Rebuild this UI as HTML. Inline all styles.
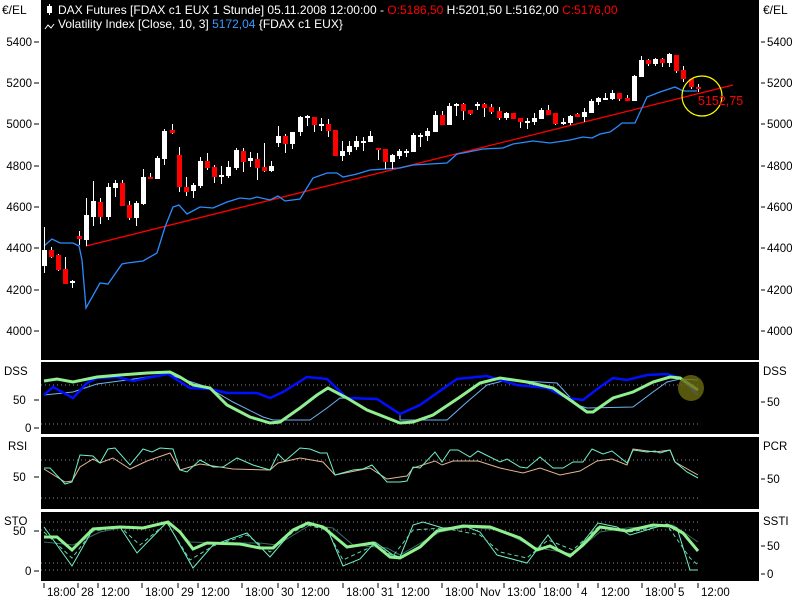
<!DOCTYPE html>
<html><head><meta charset="utf-8"><style>
html,body{margin:0;padding:0;background:#fff;width:800px;height:600px;overflow:hidden}
svg{display:block}
text{font-family:"Liberation Sans",sans-serif;font-size:11.5px;fill:#000}
.hd{font-size:12px}
.w{fill:#fff}.r{fill:#f00}.b{fill:#3b9bff}
</style></head><body>
<svg width="800" height="600" viewBox="0 0 800 600" xmlns="http://www.w3.org/2000/svg">
<rect x="0" y="0" width="800" height="600" fill="#fff"/>
<rect x="41" y="0" width="718" height="360" fill="#000"/>
<rect x="41" y="362" width="718" height="72" fill="#000"/>
<rect x="41" y="437" width="718" height="72" fill="#000"/>
<rect x="41" y="512" width="718" height="69" fill="#000"/>

<path d="M49.5 4V15" stroke="#fff"/><rect x="47" y="6" width="5" height="7" fill="#fff"/>
<text x="58" y="14" class="w hd">DAX Futures [FDAX c1 EUX  1 Stunde] 05.11.2008 12:00:00 - <tspan class="r">O:5186,50</tspan> H:5201,50 L:5162,00 <tspan class="r">C:5176,00</tspan></text>
<path d="M45 29l3-4 3 3 3-4" stroke="#fff" fill="none"/>
<text x="58" y="28" class="w hd">Volatility Index [Close, 10, 3] <tspan class="b">5172,04</tspan> {FDAX c1 EUX}</text>

<text x="2" y="14" class="hd">€/EL</text><text x="763" y="14" class="hd">€/EL</text>
<g text-anchor="end">
<text x="32" y="46">5400</text><text x="32" y="87">5200</text><text x="32" y="128">5000</text><text x="32" y="170">4800</text><text x="32" y="211">4600</text><text x="32" y="252">4400</text><text x="32" y="294">4200</text><text x="32" y="335">4000</text>
</g>
<path d="M34 42h5M34 83h5M34 124h5M34 166h5M34 207h5M34 248h5M34 290h5M34 331h5M761 42h4M761 83h4M761 124h4M761 166h4M761 207h4M761 248h4M761 290h4M761 331h4" stroke="#000"/>
<text x="767" y="46">5400</text><text x="767" y="87">5200</text><text x="767" y="128">5000</text><text x="767" y="170">4800</text><text x="767" y="211">4600</text><text x="767" y="252">4400</text><text x="767" y="294">4200</text><text x="767" y="335">4000</text>

<path d="M86 246L733 85" stroke="#f00" stroke-width="1.3"/>
<polyline fill="none" stroke="#2a8cff" stroke-width="1.3" points="44,246 52,239 60,243 73,243 79,246 82,260 86,308 100,283 108,284 122,264 127,263 143,261 157,253 165,227 173,207 179,205 187,214 200,207 213,208 227,202 240,198 250,199 257,197 270,200 278,196 285,201 300,199 313,178 327,173 337,173 343,177 357,174 370,170 400,168 413,165 447,163 457,154 463,153 483,149 503,148 513,144 533,141 550,143 570,140 583,137 592,138 600,134 610,132 617,127 622,123 635,123 647,97 660,92 675,87 683,91 697,91"/>

<path stroke="#fff" stroke-width="1" d="M44.5 227V273M51.5 247V258M58.5 254V271M65.5 257V284M72.5 280V288M79.5 231V245M86.5 198V246M93.5 181V226M100.5 198V224M108.5 183V220M115.5 180V197M122.5 180V206M129.5 201V220M136.5 201V226M143.5 169V205M150.5 173V179M157.5 156V179M164.5 129V165M172.5 124V134M179.5 147V192M186.5 177V196M193.5 183V198M200.5 157V188M207.5 153V170M214.5 165V183M221.5 166V184M228.5 161V178M236.5 148V170M243.5 148V172M250.5 152V167M257.5 153V180M264.5 143V172M271.5 161V172M278.5 126V147M285.5 134V153M292.5 132V149M300.5 116V136M307.5 115V126M314.5 117V132M321.5 118V131M328.5 119V137M335.5 130V156M342.5 141V161M349.5 141V155M356.5 136V150M363.5 137V151M370.5 131V142M378.5 148V160M385.5 149V169M392.5 154V169M399.5 149V159M406.5 149V157M413.5 133V152M420.5 133V147M427.5 128V141M435.5 111V132M442.5 111V125M449.5 103V125M456.5 103V116M463.5 103V120M470.5 110V115M477.5 102V110M484.5 103V117M491.5 104V114M499.5 107V120M506.5 112V120M513.5 113V119M520.5 118V128M527.5 118V129M534.5 113V125M541.5 108V119M548.5 105V115M555.5 113V125M563.5 118V125M570.5 115V125M577.5 113V117M584.5 108V122M591.5 99V113M598.5 97V105M605.5 93V99M612.5 90V100M619.5 93V101M627.5 95V101M634.5 75V101M641.5 56V77M648.5 59V66M655.5 58V66M662.5 58V67M669.5 53V67M676.5 55V73M683.5 66V82M691.5 79V89M698.5 84V92"/>
<path fill="#fff" d="M42 250h5v16h-5zM70 281h5v2h-5zM84 215h5v25h-5zM91 201h5v16h-5zM106 187h5v30h-5zM113 183h5v5h-5zM134 203h5v15h-5zM141 177h5v27h-5zM155 158h5v21h-5zM162 131h5v28h-5zM191 185h5v6h-5zM198 161h5v25h-5zM219 175h5v2h-5zM226 167h5v9h-5zM234 150h5v18h-5zM248 158h5v3h-5zM269 166h5v5h-5zM276 136h5v7h-5zM290 132h5v12h-5zM298 117h5v15h-5zM305 116h5v2h-5zM319 124h5v2h-5zM340 151h5v5h-5zM347 146h5v6h-5zM354 141h5v6h-5zM361 141h5v2h-5zM368 136h5v6h-5zM390 155h5v7h-5zM397 151h5v5h-5zM404 151h5v2h-5zM411 135h5v17h-5zM418 135h5v2h-5zM425 131h5v5h-5zM433 115h5v17h-5zM447 106h5v19h-5zM454 104h5v2h-5zM475 104h5v2h-5zM504 113h5v5h-5zM525 121h5v2h-5zM532 118h5v4h-5zM539 110h5v9h-5zM561 122h5v2h-5zM568 116h5v7h-5zM582 112h5v5h-5zM589 101h5v12h-5zM596 98h5v4h-5zM603 98h5v2h-5zM610 93h5v6h-5zM632 76h5v25h-5zM639 60h5v17h-5zM653 59h5v5h-5zM667 54h5v9h-5z"/>
<path fill="#f00" d="M49 250h5v7h-5zM56 255h5v15h-5zM63 269h5v15h-5zM77 236h5v3h-5zM98 202h5v15h-5zM120 183h5v23h-5zM127 205h5v13h-5zM148 177h5v2h-5zM170 130h5v3h-5zM177 155h5v32h-5zM184 187h5v5h-5zM205 161h5v7h-5zM212 167h5v10h-5zM241 151h5v11h-5zM255 159h5v9h-5zM262 167h5v4h-5zM283 136h5v8h-5zM312 117h5v8h-5zM326 124h5v7h-5zM333 130h5v26h-5zM376 148h5v2h-5zM383 149h5v13h-5zM440 115h5v10h-5zM461 104h5v7h-5zM468 110h5v4h-5zM482 104h5v4h-5zM489 107h5v5h-5zM497 111h5v7h-5zM511 113h5v6h-5zM518 118h5v4h-5zM546 110h5v5h-5zM553 113h5v11h-5zM575 114h5v3h-5zM617 93h5v6h-5zM625 98h5v3h-5zM646 60h5v4h-5zM660 59h5v4h-5zM674 55h5v16h-5zM681 70h5v9h-5zM689 79h5v8h-5zM696 87h5v2h-5z"/>
<circle cx="702" cy="96" r="20" fill="none" stroke="#ff0" stroke-width="1.2"/>
<text x="698" y="105" class="r" style="font-size:12.5px">5152,75</text>

<path d="M41 385H698M41 424H698" stroke="#888" stroke-dasharray="1 3"/>
<polyline fill="none" stroke="#6fb4f5" stroke-width="1" points="44,395 73,392 97,384 127,380 167,374 207,387 233,402 263,417 273,420 310,420 327,408 340,398 377,399 400,414 400,420 447,420 467,402 487,385 507,380 557,383 577,405 587,408 633,407 653,392 667,382 680,379 698,380"/>
<polyline fill="none" stroke="#0010ff" stroke-width="2.5" points="44,395 53,387 73,398 87,383 97,378 117,377 133,381 147,378 168,374 190,388 210,389 227,393 257,393 270,398 283,392 307,377 327,379 347,398 377,399 400,414 420,405 437,393 457,379 487,376 517,385 547,388 567,398 583,400 600,387 613,378 627,380 647,375 667,374 680,378 698,395"/>
<polyline fill="none" stroke="#90f090" stroke-width="3" points="44,381 57,379 73,382 97,377 120,375 147,373 170,372 180,377 193,385 210,388 227,405 250,417 270,423 280,422 300,408 317,395 328,388 347,398 367,410 400,423 413,422 433,415 460,397 480,383 500,378 527,382 553,388 573,402 587,412 593,412 613,398 633,392 653,382 670,377 680,378 698,390"/>
<circle cx="691" cy="388" r="13" fill="#6b6b10" fill-opacity="0.8"/>
<text x="4" y="375">DSS</text><text x="13" y="404">50</text><text x="25" y="432">0</text>
<path d="M34 400h5M34 428h5M761 402h4" stroke="#000"/>
<text x="763" y="375">DSS</text><text x="767" y="406">50</text>

<path d="M41 460H698M41 498H698" stroke="#888" stroke-dasharray="1 3"/>
<polyline fill="none" stroke="#e0b890" stroke-width="1" points="44,469 65,482 72,481 80,467 93,459 100,463 113,458 130,469 147,461 170,453 180,470 200,464 233,469 270,470 278,463 300,458 323,462 335,475 370,468 387,479 400,477 407,476 413,468 435,461 442,465 453,461 478,461 500,468 523,473 540,468 560,475 580,471 597,461 612,459 627,465 633,449 655,452 670,450 675,462 698,475"/>
<polyline fill="none" stroke="#70f0c8" stroke-width="1" points="44,468 50,468 65,484 72,482 80,455 93,456 100,463 108,449 115,448 130,465 143,449 152,452 160,448 173,449 180,470 187,472 200,460 213,467 223,467 237,458 253,465 270,470 278,454 285,461 300,448 310,449 320,453 327,453 335,475 353,470 363,469 372,465 387,482 400,482 407,481 413,467 420,468 435,452 442,462 450,450 458,450 470,457 478,451 500,462 507,459 520,467 527,468 540,457 553,468 563,468 573,462 583,462 592,449 603,454 612,451 627,463 633,450 647,452 655,451 660,453 670,450 675,462 687,472 698,478"/>
<text x="8" y="450">RSI</text><text x="13" y="481">50</text><path d="M34 477h5M761 479h4" stroke="#000"/>
<text x="763" y="450">PCR</text><text x="767" y="483">50</text>

<path d="M41 522H698M41 530H698M41 563H698M41 570H698" stroke="#888" stroke-dasharray="1 3"/>
<polyline fill="none" stroke="#3a6a60" stroke-width="1" points="44,542 73,545 100,532 120,528 147,527 170,523 190,542 217,543 260,543 277,545 310,525 333,528 353,545 387,548 400,555 440,532 467,527 500,530 533,547 573,554 600,532 627,528 673,525 698,542"/>
<polyline fill="none" stroke="#70f0c8" stroke-width="1" points="44,527 72,566 93,529 120,527 137,553 167,522 193,568 213,545 247,533 270,557 293,530 307,523 327,528 343,566 360,559 375,542 393,555 400,557 413,525 423,522 443,528 467,527 480,532 497,555 527,563 548,535 560,552 573,555 598,523 617,527 630,535 667,524 677,528 690,570 698,570"/>
<polyline fill="none" stroke="#60d8a8" stroke-width="1" stroke-dasharray="4 3" points="44,532 72,558 93,531 120,527 140,545 167,523 190,560 213,546 247,535 270,552 293,532 307,525 327,530 343,560 375,545 393,556 413,530 443,528 480,535 500,552 527,558 548,540 573,550 598,527 630,532 667,525 690,558 698,565"/>
<polyline fill="none" stroke="#90f090" stroke-width="3" points="44,537 57,537 72,550 93,529 120,527 143,528 168,522 180,532 193,549 207,543 240,544 260,548 273,548 293,530 308,523 323,527 347,547 373,543 390,557 400,558 420,547 437,531 463,526 490,527 520,538 537,550 550,546 570,556 583,545 600,527 627,531 653,525 670,526 683,533 698,551"/>
<text x="4" y="525">STO</text><text x="13" y="535">50</text><text x="25" y="575">0</text>
<path d="M34 531h5M34 571h5M761 546h4M761 574h4" stroke="#000"/>
<text x="763" y="525">SSTI</text><text x="767" y="550">50</text><text x="767" y="578">0</text>

<path stroke="#000" d="M44 583v5M78 583v5M98 583v5M142 583v5M178 583v5M198 583v5M242 583v5M278 583v5M298 583v5M343 583v5M378 583v5M398 583v5M442 583v5M477 583v5M504 583v5M540 583v5M578 583v5M598 583v5M642 583v5M675 583v5M698 583v5"/>
<g>
<text x="47" y="596">18:00</text><text x="81" y="596">28</text><text x="101" y="596">12:00</text><text x="145" y="596">18:00</text><text x="181" y="596">29</text><text x="201" y="596">12:00</text><text x="245" y="596">18:00</text><text x="281" y="596">30</text><text x="301" y="596">12:00</text><text x="346" y="596">18:00</text><text x="381" y="596">31</text><text x="401" y="596">12:00</text><text x="445" y="596">18:00</text><text x="480" y="596">Nov</text><text x="507" y="596">13:00</text><text x="543" y="596">18:00</text><text x="581" y="596">4</text><text x="601" y="596">12:00</text><text x="645" y="596">18:00</text><text x="678" y="596">5</text><text x="701" y="596">12:00</text>
</g>
</svg>
</body></html>
